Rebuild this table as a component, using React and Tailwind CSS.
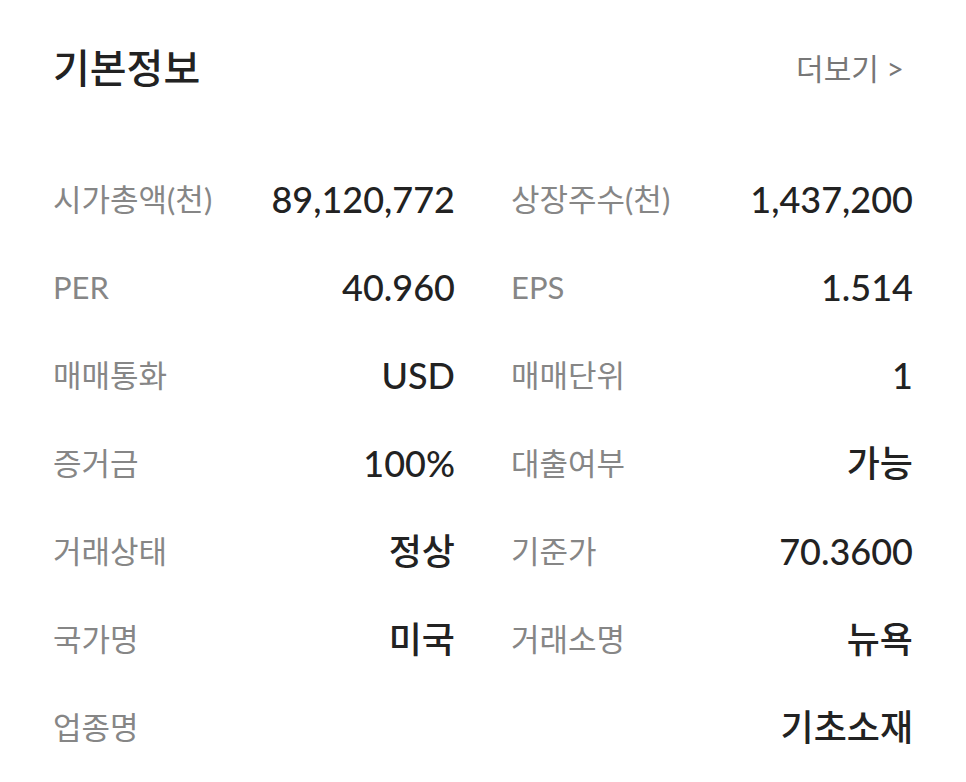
const rows = [
  [["시가총액(천)", "89,120,772"], ["상장주수(천)", "1,437,200"]],
  [["PER", "40.960"], ["EPS", "1.514"]],
  [["매매통화", "USD"], ["매매단위", "1"]],
  [["증거금", "100%"], ["대출여부", "가능"]],
  [["거래상태", "정상"], ["기준가", "70.3600"]],
  [["국가명", "미국"], ["거래소명", "뉴욕"]],
];

const Cell = ({ label, value }) => (
  <div className="flex items-center justify-between h-[88px]">
    <span className="text-[31px] text-[#868686]">{label}</span>
    <span className="text-[36px] font-medium text-[#222222]">{value}</span>
  </div>
);

export default function App() {
  return (
    <div className="w-[966px] h-[782px] bg-white px-[53px] overflow-hidden font-['Lato','Noto_Sans_CJK_KR',sans-serif]">
      <div className="flex items-center justify-between h-[136px]">
        <h1 className="text-[40px] font-medium text-[#222222]">기본정보</h1>
        <button className="text-[30px] text-[#777777] mr-[9px]">더보기 &gt;</button>
      </div>
      <div className="mt-[19px] grid grid-cols-2 gap-x-[56px]">
        {rows.map((r, i) => (
          <div key={i} className="contents">
            <Cell label={r[0][0]} value={r[0][1]} />
            <Cell label={r[1][0]} value={r[1][1]} />
          </div>
        ))}
        <div className="col-span-2">
          <Cell label="업종명" value="기초소재" />
        </div>
      </div>
    </div>
  );
}
